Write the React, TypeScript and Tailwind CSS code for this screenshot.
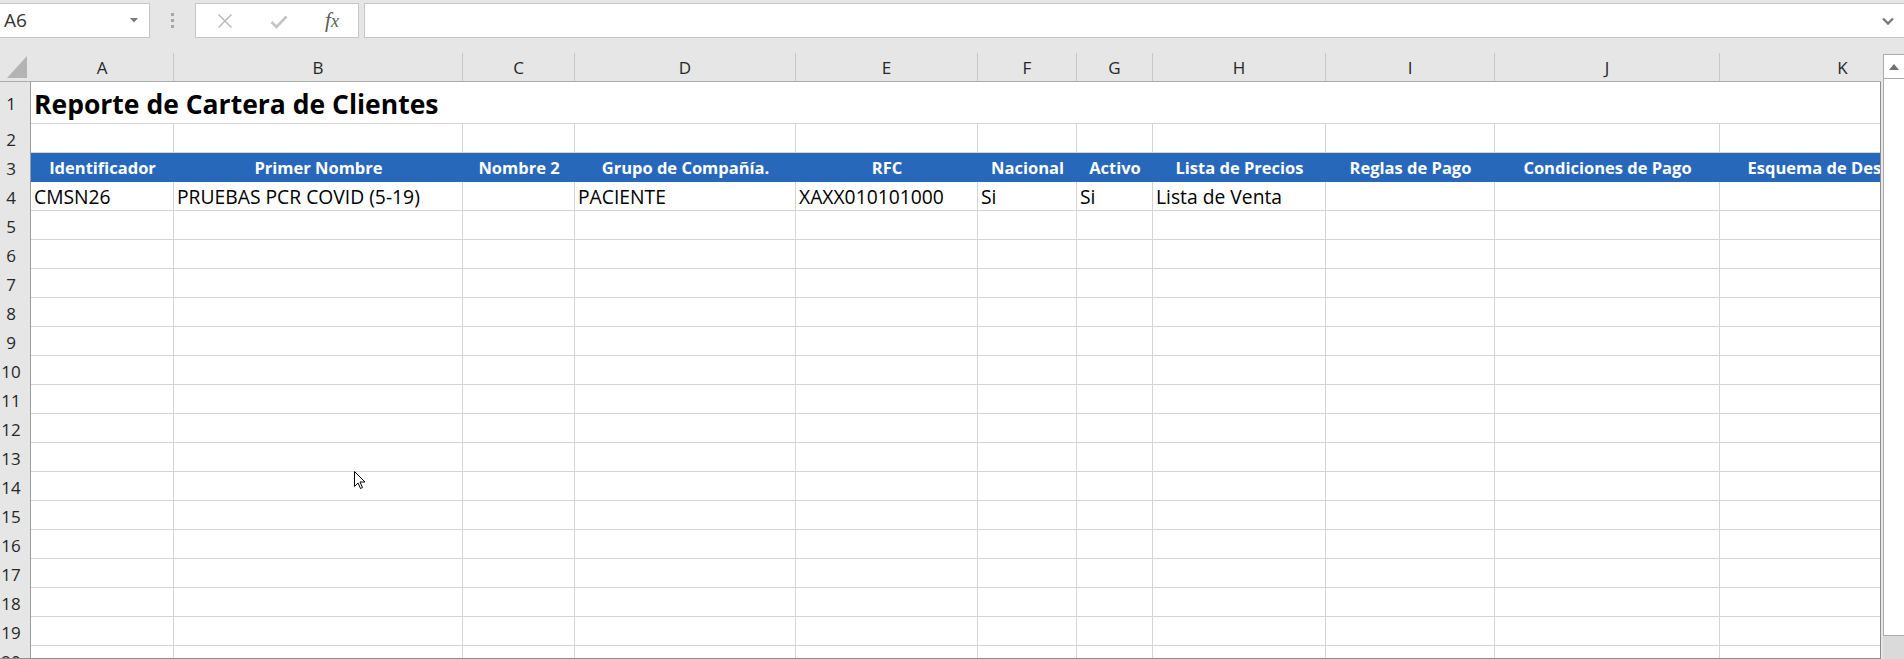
import React from 'react';

const font = { fontFamily: '"Open Sans", Lato, sans-serif' };

// column letters + widths (incl. right gridline)
const columns = [
  { letter: 'A', w: 'w-[143px]', head: 'Identificador', value: 'CMSN26' },
  { letter: 'B', w: 'w-[289px]', head: 'Primer Nombre', value: 'PRUEBAS PCR COVID (5-19)' },
  { letter: 'C', w: 'w-[112px]', head: 'Nombre 2', value: '' },
  { letter: 'D', w: 'w-[221px]', head: 'Grupo de Compañía.', value: 'PACIENTE' },
  { letter: 'E', w: 'w-[182px]', head: 'RFC', value: 'XAXX010101000' },
  { letter: 'F', w: 'w-[99px]', head: 'Nacional', value: 'Si' },
  { letter: 'G', w: 'w-[76px]', head: 'Activo', value: 'Si' },
  { letter: 'H', w: 'w-[173px]', head: 'Lista de Precios', value: 'Lista de Venta' },
  { letter: 'I', w: 'w-[169px]', head: 'Reglas de Pago', value: '' },
  { letter: 'J', w: 'w-[225px]', head: 'Condiciones de Pago', value: '' },
  { letter: 'K', w: 'w-[246px]', head: 'Esquema de Descuento', value: '' },
];

const emptyRows = Array.from({ length: 16 }, (_, i) => i + 5);

function RowHeader({ n, h }: { n: number; h: string }) {
  return (
    <div
      className={`${h} w-[31px] shrink-0 bg-[#e6e6e6] border-r border-[#9b9b9b] flex items-center justify-center pr-[8px] pt-[1px] text-[17px] leading-none text-[#262626]`}
    >
      {n}
    </div>
  );
}

function Toolbar() {
  return (
    <div className="h-[53px] pt-[3px] flex items-start bg-[#e6e6e6]">
      {/* name box */}
      <div className="w-[150px] h-[35px] bg-white border border-[#c6c6c6] border-l-0 flex items-center justify-between pl-[4px] pr-[11px]">
        <span className="text-[19px] text-[#333]">A6</span>
        <svg width="8" height="5" viewBox="0 0 8 5">
          <path d="M0 0h8L4 4.5z" fill="#7a7a7a" />
        </svg>
      </div>
      {/* grip dots */}
      <div className="w-[45px] h-[35px] flex flex-col items-center justify-center gap-[3px]">
        <div className="w-[3px] h-[3px] bg-[#a6a6a6]" />
        <div className="w-[3px] h-[3px] bg-[#a6a6a6]" />
        <div className="w-[3px] h-[3px] bg-[#a6a6a6]" />
      </div>
      {/* cancel / enter / fx */}
      <div className="w-[164px] h-[35px] bg-white border border-[#c6c6c6] flex items-center">
        <div className="w-[55px] flex justify-center pl-[2px]">
          <svg width="16" height="16" viewBox="0 0 16 16">
            <path d="M1.5 1.5l13 13M14.5 1.5l-13 13" stroke="#bdbdbd" strokeWidth="1.6" fill="none" />
          </svg>
        </div>
        <div className="w-[55px] flex justify-center pt-[2px]">
          <svg width="18" height="14" viewBox="0 0 18 14">
            <path d="M1.5 7l5 5L16.5 1.5" stroke="#c4c4c4" strokeWidth="2.6" fill="none" />
          </svg>
        </div>
        <div className="w-[52px] flex justify-center">
          <span className="text-[21px] italic text-[#5a5a5a] leading-none" style={{ fontFamily: '"Liberation Serif", serif' }}>
            <span>f</span>
            <span className="text-[18px]">x</span>
          </span>
        </div>
      </div>
      <div className="w-[5px]" />
      {/* formula bar */}
      <div className="flex-1 h-[35px] bg-white border border-[#c6c6c6] border-r-0 flex items-center justify-end pr-[10px]">
        <svg width="12" height="8" viewBox="0 0 12 8">
          <path d="M1 1.5l5 5 5-5" stroke="#7a7a7a" strokeWidth="2.4" fill="none" />
        </svg>
      </div>
    </div>
  );
}

function Scrollbar() {
  return (
    <div className="w-[21px] ml-[2px] flex flex-col bg-[#e6e6e6]">
      <div className="h-[25px] mt-[1px] bg-white border border-[#ababab] border-r-0 flex items-center justify-center">
        <svg width="10" height="6" viewBox="0 0 10 6">
          <path d="M0 6L5 0l5 6z" fill="#707070" />
        </svg>
      </div>
      <div className="h-[557px] bg-white border-l border-b border-[#ababab]" />
      <div className="flex-1 bg-[#dadada]" />
    </div>
  );
}

export default function App() {
  return (
    <div className="w-[1904px] h-[659px] overflow-hidden bg-[#e6e6e6] relative" style={font}>
      <Toolbar />
      <div className="flex h-[606px]">
        <div className="w-[1881px] overflow-hidden flex flex-col border-b border-[#8c8c8c]">
          {/* column headers */}
          <div className="flex h-[29px] shrink-0 border-b border-[#ababab]">
            <div className="w-[31px] shrink-0 flex items-end justify-end pr-[3px] pb-[3px] border-r border-transparent">
              <svg width="20" height="22" viewBox="0 0 20 22">
                <path d="M20 0v22H0z" fill="#b4b4b4" />
              </svg>
            </div>
            {columns.map((c) => (
              <div
                key={c.letter}
                className={`${c.w} shrink-0 border-r border-[#c8c8c8] flex items-center justify-center pt-[1px] text-[17px] leading-none text-[#262626]`}
              >
                {c.letter}
              </div>
            ))}
          </div>
          <div className="flex-1 flex flex-col border-r border-[#8c8c8c] bg-white overflow-hidden">
            {/* row 1 title */}
            <div className="flex h-[42px] shrink-0">
              <RowHeader n={1} h="h-[42px]" />
              <div className="flex-1 border-b border-[#d4d4d4] flex items-center pl-[3px] pt-[3px]">
                <span className="text-[26.5px] font-bold text-black leading-none whitespace-nowrap">
                  Reporte de Cartera de Clientes
                </span>
              </div>
            </div>
            {/* row 2 */}
            <div className="flex h-[29px] shrink-0">
              <RowHeader n={2} h="h-[29px]" />
              {columns.map((c) => (
                <div key={c.letter} className={`${c.w} shrink-0 border-r border-b border-[#d4d4d4]`} />
              ))}
            </div>
            {/* row 3 table head */}
            <div className="flex h-[29px] shrink-0">
              <RowHeader n={3} h="h-[29px]" />
              <div className="flex bg-[#2868ba]">
                {columns.map((c) => (
                  <div
                    key={c.letter}
                    className={`${c.w} shrink-0 flex items-center justify-center pt-[2px] text-[16.5px] font-bold text-white leading-none whitespace-nowrap`}
                  >
                    {c.head}
                  </div>
                ))}
              </div>
            </div>
            {/* row 4 data */}
            <div className="flex h-[29px] shrink-0">
              <RowHeader n={4} h="h-[29px]" />
              {columns.map((c) => (
                <div
                  key={c.letter}
                  className={`${c.w} shrink-0 border-r border-b border-[#d4d4d4] flex items-center pl-[3px] pt-[2px] text-[19.3px] text-black leading-none whitespace-nowrap`}
                >
                  {c.value}
                </div>
              ))}
            </div>
            {emptyRows.map((n) => (
              <div key={n} className="flex h-[29px] shrink-0">
                <RowHeader n={n} h="h-[29px]" />
                {columns.map((c) => (
                  <div key={c.letter} className={`${c.w} shrink-0 border-r border-b border-[#d4d4d4]`} />
                ))}
              </div>
            ))}
          </div>
        </div>
        <Scrollbar />
      </div>
      {/* mouse pointer */}
      <svg className="absolute left-[354px] top-[471px]" width="13" height="19" viewBox="0 0 13 19">
        <path d="M0.5 0.5v15l3.5-3.5 2.5 5.5 2-1-2.5-5.5H11z" fill="white" stroke="black" strokeWidth="1" />
      </svg>
    </div>
  );
}
